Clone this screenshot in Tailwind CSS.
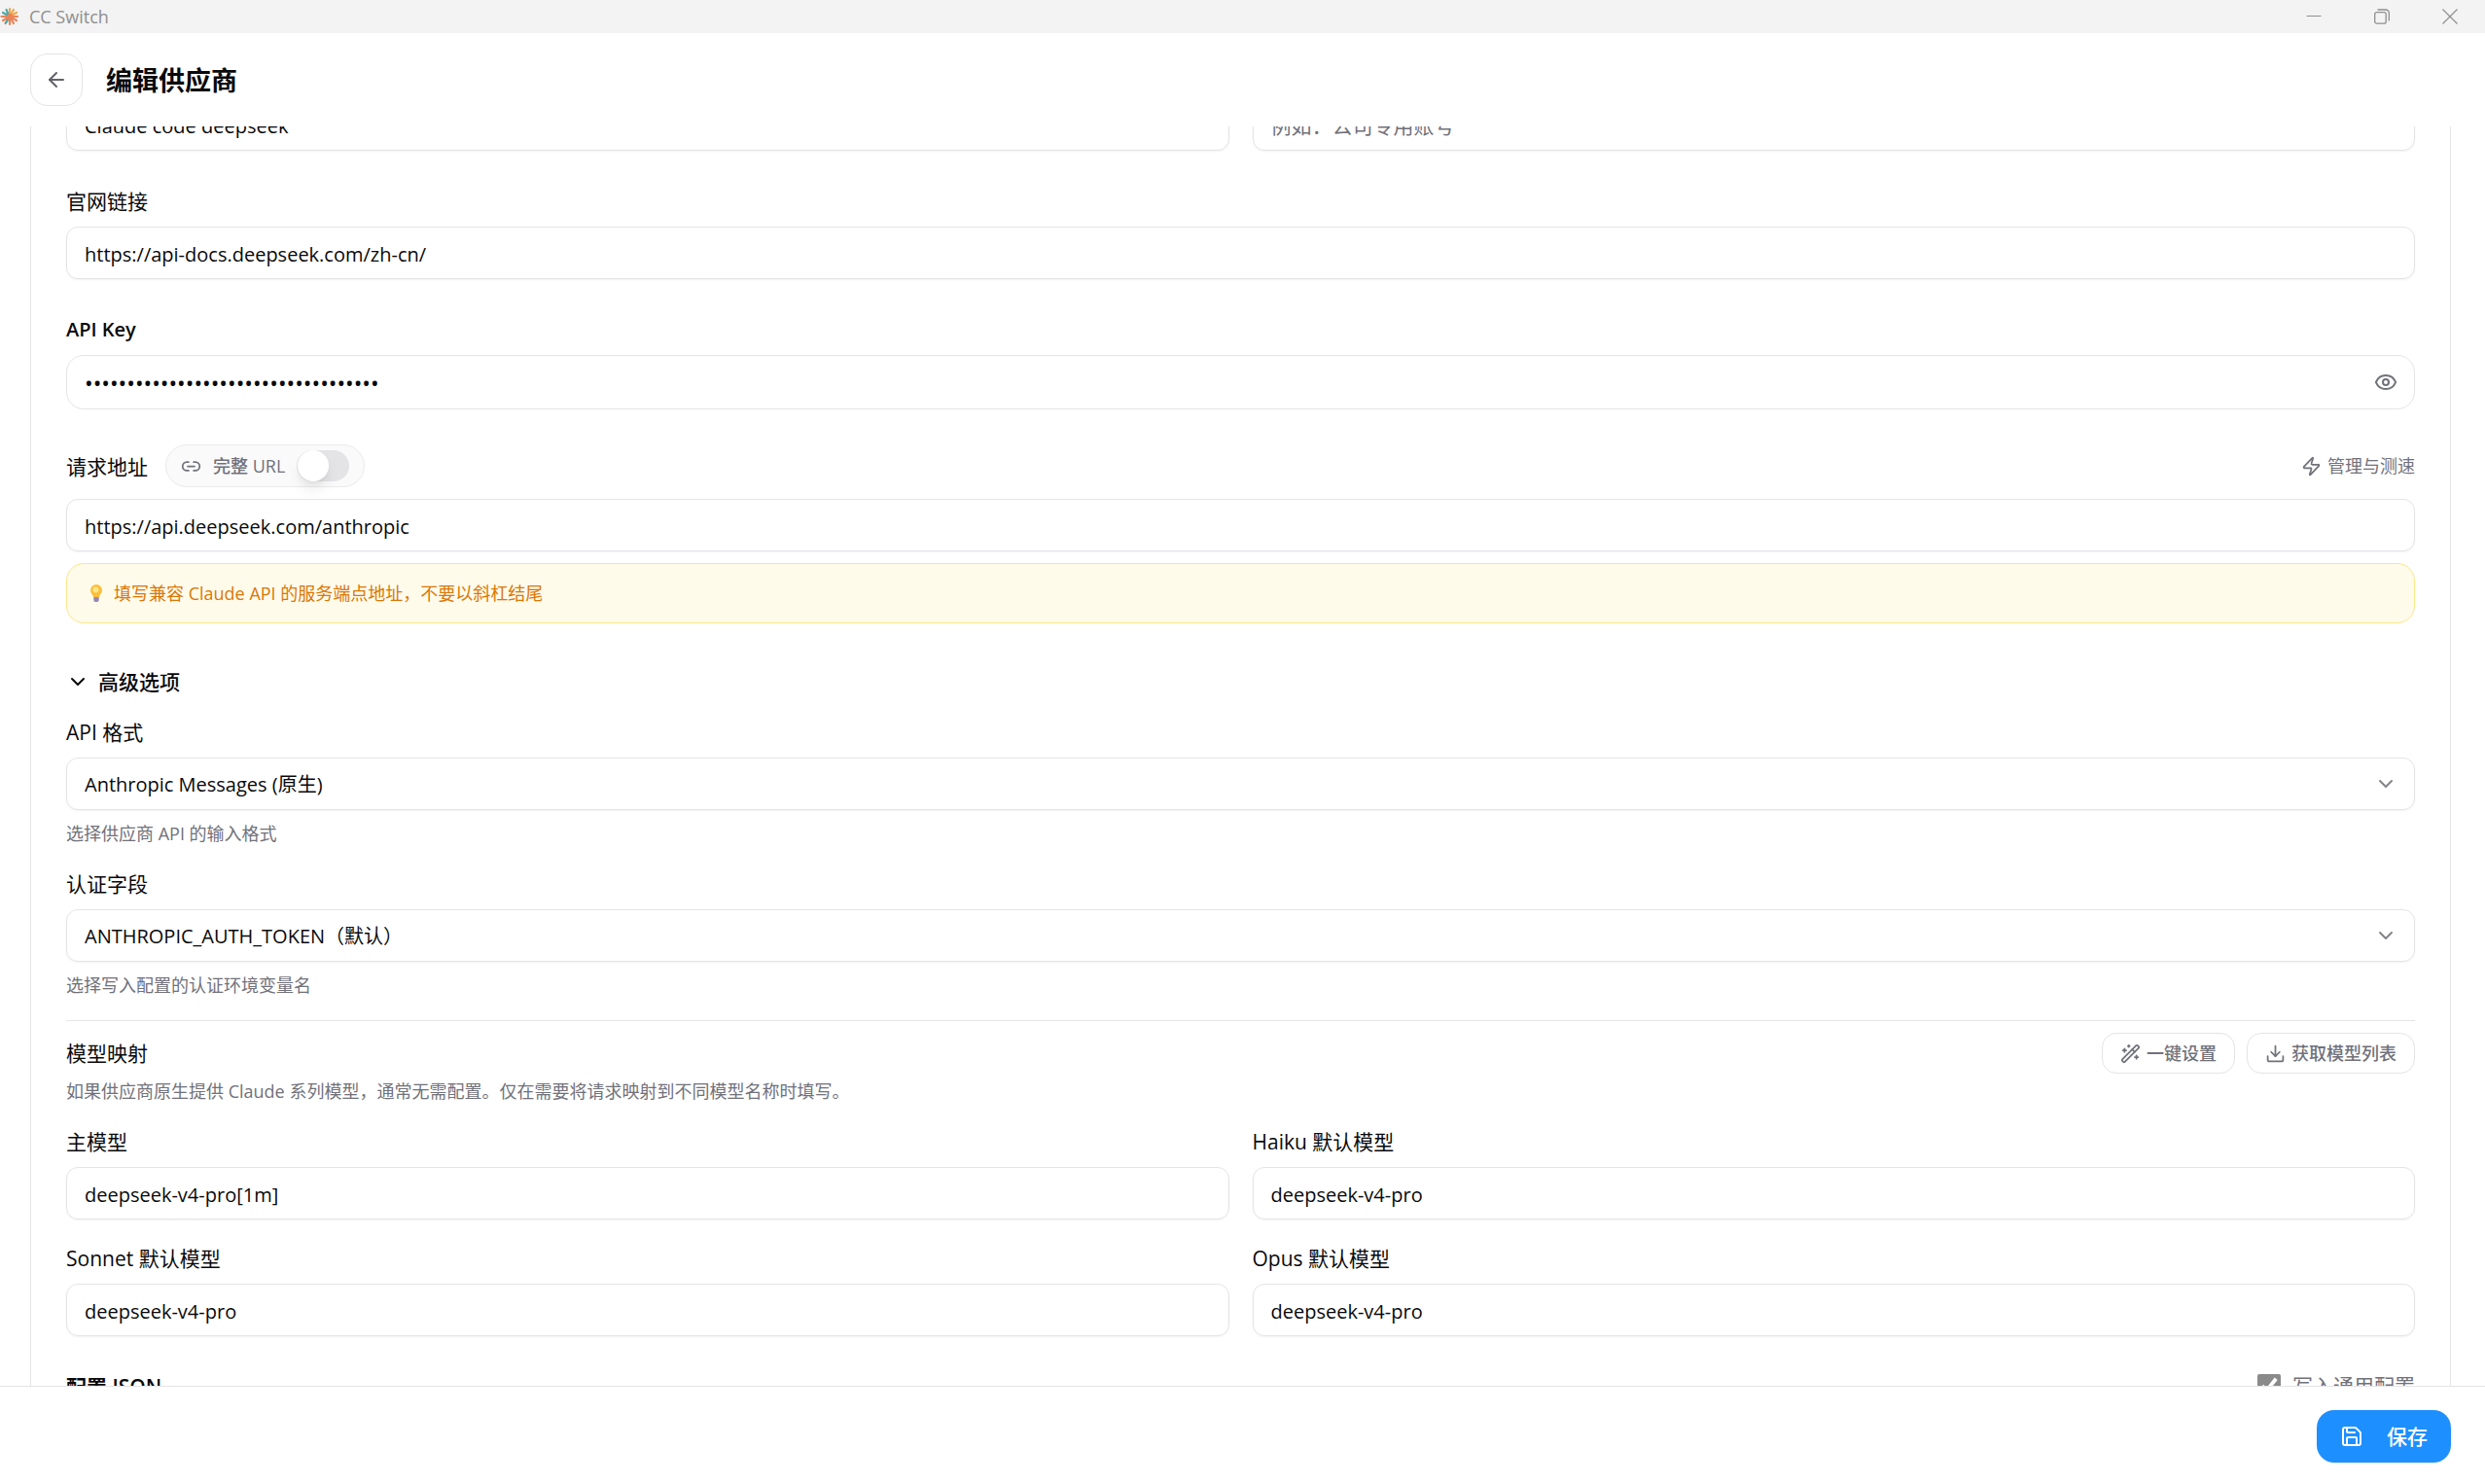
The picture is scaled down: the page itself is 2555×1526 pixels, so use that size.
<!DOCTYPE html>
<html lang="zh-CN">
<head>
    <meta charset="UTF-8">
    <meta name="viewport" content="width=device-width, initial-scale=1.0">
    <title>CC Switch</title>
    <script src="https://cdn.jsdelivr.net/npm/@tailwindcss/browser@4"></script>
</head>
<body class="h-screen flex flex-col overflow-hidden bg-white text-[#09090b] text-[21px] leading-[30px] font-['Open_Sans','Noto_Sans_CJK_SC',sans-serif]">
    <!-- Title Bar -->
    <div class="h-[34px] shrink-0 flex items-center justify-between bg-[#f3f3f3] text-[#8f8f8f]">
        <div class="flex items-center gap-[10px]">
            <svg class="size-5" viewBox="0 0 20 20" fill="none" stroke-width="2.2" stroke-linecap="round">
                <path stroke="#e8845a" d="M10 10h8M10 10l7 4M10 10l4 7M10 10v8M10 10l-4.500 7M10 10l-7 4M10 10H1.500"/>
                <path stroke="#f0a850" d="M10 10V2M10 10l4-7M10 10l7-4"/>
                <path stroke="#4fa8a8" d="M8.500 7.500L6.500 3M7.500 8.500L3 6M6 16.500L7.500 14"/>
                <circle cx="10" cy="10" r="3" fill="#e8845a"/>
            </svg>
            <span class="text-[18px] leading-6">CC Switch</span>
        </div>
        <div class="flex pr-px">
            <button type="button" aria-label="最小化" class="w-[70px] h-[34px] flex items-center justify-center">
                <svg class="size-4" viewBox="0 0 16 16" fill="none" stroke="currentColor"><path d="M0.500 7.500h15"/></svg>
            </button>
            <button type="button" aria-label="还原" class="w-[70px] h-[34px] flex items-center justify-center">
                <svg class="size-4" viewBox="0 0 16 16" fill="none" stroke="currentColor" stroke-width="1.300"><rect x="0.700" y="3.700" width="11.500" height="11.500" rx="2"/><path d="M3.500 1h8.500a3.300 3.300 0 0 1 3.300 3.300V12.500"/></svg>
            </button>
            <button type="button" aria-label="关闭" class="w-[70px] h-[34px] flex items-center justify-center">
                <svg class="size-4" viewBox="0 0 16 16" fill="none" stroke="currentColor" stroke-width="1.200"><path d="M0.500 0.500l15 15M15.500 0.500l-15 15"/></svg>
            </button>
        </div>
    </div>

    <!-- Page Header -->
    <header class="h-24 shrink-0 flex items-center gap-6 pl-[31px]">
        <button type="button" aria-label="返回" class="size-[54px] flex items-center justify-center rounded-[18px] border border-[#e4e4e7] text-[#62626a]">
            <svg class="size-6" viewBox="0 0 24 24" fill="none" stroke="currentColor" stroke-width="2" stroke-linecap="round" stroke-linejoin="round"><path d="m12 19-7-7 7-7"/><path d="M19 12H5"/></svg>
        </button>
        <h1 class="pt-0.5 text-[27px] leading-9 font-bold">编辑供应商</h1>
    </header>

    <!-- Form -->
    <main class="flex-1 min-h-0 overflow-hidden pl-[31px] pr-[35px]">
        <form id="providerForm" class="-mt-[29px] flex flex-col gap-9 border-x border-[#e4e4e7] px-9 pb-12">
            <div class="grid grid-cols-2 gap-6">
                <input type="text" aria-label="供应商名称" value="Claude code deepseek" class="h-[54px] w-full pt-0.5 px-[18px] text-[20px] rounded-xl border border-[#e4e4e7] shadow-xs">
                <input type="text" aria-label="备注" placeholder="例如：公司专用账号" class="h-[54px] w-full pt-0.5 px-[18px] rounded-xl border border-[#e4e4e7] shadow-xs placeholder:text-[#71717a]">
            </div>

            <div class="flex flex-col gap-3">
                <label for="website" class="pt-0.5 leading-7">官网链接</label>
                <input type="text" id="website" value="https://api-docs.deepseek.com/zh-cn/" class="h-[54px] w-full pt-0.5 px-[18px] text-[20px] rounded-xl border border-[#e4e4e7] shadow-xs">
            </div>

            <div class="flex flex-col gap-3">
                <label for="apiKey" class="pt-0.5 leading-7 text-[20px] font-semibold">API Key</label>
                <div class="relative">
                    <input type="password" id="apiKey" value="sk-00000000000000000000000000000000" class="block h-14 w-full pt-0.5 pl-[18px] pr-[60px] text-[23px] rounded-[18px] border border-[#e4e4e7]">
                    <button type="button" id="toggleKey" aria-label="显示" class="absolute inset-y-0 right-[18px] flex items-center text-[#71717a]">
                        <svg class="size-6" viewBox="0 0 24 24" fill="none" stroke="currentColor" stroke-width="2" stroke-linecap="round" stroke-linejoin="round"><path d="M2.062 12.348a1 1 0 0 1 0-.696 10.750 10.750 0 0 1 19.876 0 1 1 0 0 1 0 .696 10.750 10.750 0 0 1-19.876 0"/><circle cx="12" cy="12" r="3"/></svg>
                    </button>
                </div>
            </div>

            <div class="flex flex-col gap-3">
                <div class="flex items-center justify-between">
                    <div class="flex items-center gap-[18px]">
                        <label for="baseUrl" class="pt-0.5 leading-7">请求地址</label>
                        <label class="h-11 flex items-center gap-3 px-[15px] rounded-full border border-[#ebebed] bg-[#fafafa] text-[18px] leading-6 font-medium text-[#71717a]">
                            <svg class="size-[21px]" viewBox="0 0 24 24" fill="none" stroke="currentColor" stroke-width="2" stroke-linecap="round" stroke-linejoin="round"><path d="M9 17H7A5 5 0 0 1 7 7h2"/><path d="M15 7h2a5 5 0 1 1 0 10h-2"/><path d="M8 12h8"/></svg>
                            <span>完整 URL</span>
                            <input type="checkbox" role="switch" class="appearance-none w-[54px] h-8 rounded-full bg-[#e4e4e7] before:block before:size-8 before:ml-px before:rounded-full before:bg-white before:shadow-lg checked:bg-[#1e8fff] checked:before:ml-[22px]">
                        </label>
                    </div>
                    <button type="button" class="flex items-center gap-[6px] text-[18px] leading-6 text-[#71717a]">
                        <svg class="size-[21px]" viewBox="0 0 24 24" fill="none" stroke="currentColor" stroke-width="2" stroke-linecap="round" stroke-linejoin="round"><path d="M4 14a1 1 0 0 1-.780-1.630l9.900-10.200a.5.5 0 0 1 .860.460l-1.920 6.020A1 1 0 0 0 13 10h7a1 1 0 0 1 .780 1.630l-9.900 10.200a.5.5 0 0 1-.860-.460l1.920-6.020A1 1 0 0 0 11 14z"/></svg>
                        管理与测速
                    </button>
                </div>
                <input type="text" id="baseUrl" value="https://api.deepseek.com/anthropic" class="h-[54px] w-full pt-0.5 px-[18px] text-[20px] rounded-xl border border-[#e4e4e7] shadow-xs">
                <div class="h-[62px] flex items-center gap-[6px] px-[18px] rounded-[18px] border border-[#fde68a] bg-[#fffbeb] text-[18px] leading-6 text-[#d97706]">
                    <svg class="w-6 h-[18px]" viewBox="0 0 24 18">
                        <path fill="#fbbf3c" d="M12 0a6 6 0 0 0-6 6c0 3 2.500 4.200 3 7h6c.5-2.800 3-4 3-7a6 6 0 0 0-6-6z"/>
                        <circle cx="11.500" cy="5.500" r="3" fill="#ffe48a"/>
                        <path fill="#9a86b4" d="M9.300 13h5.400v3a2 2 0 0 1-2 2h-1.400a2 2 0 0 1-2-2z"/>
                    </svg>
                    <span>填写兼容 Claude API 的服务端点地址，不要以斜杠结尾</span>
                </div>
            </div>

            <!-- Advanced Options -->
            <div class="flex flex-col gap-6">
                <div class="flex flex-col gap-3">
                    <button type="button" class="h-12 self-start flex items-center gap-[9px] font-medium">
                        <svg class="size-6" viewBox="0 0 24 24" fill="none" stroke="currentColor" stroke-width="2" stroke-linecap="round" stroke-linejoin="round"><path d="m6 9 6 6 6-6"/></svg>
                        高级选项
                    </button>
                    <label for="apiFormat" class="pt-0.5 leading-7">API 格式</label>
                    <div class="relative">
                        <select id="apiFormat" class="block appearance-none h-[54px] w-full pt-0.5 px-[18px] text-[20px] rounded-xl border border-[#e4e4e7] shadow-xs">
                            <option>Anthropic Messages (原生)</option>
                        </select>
                        <svg class="absolute top-[15px] right-[18px] size-6 text-[#84848a] pointer-events-none" viewBox="0 0 24 24" fill="none" stroke="currentColor" stroke-width="2" stroke-linecap="round" stroke-linejoin="round"><path d="m6 9 6 6 6-6"/></svg>
                    </div>
                    <p class="text-[18px] leading-6 text-[#71717a]">选择供应商 API 的输入格式</p>
                </div>

                <div class="flex flex-col gap-3">
                    <label for="authField" class="pt-0.5 leading-7">认证字段</label>
                    <div class="relative">
                        <select id="authField" class="block appearance-none h-[54px] w-full pt-0.5 px-[18px] text-[20px] rounded-xl border border-[#e4e4e7] shadow-xs">
                            <option>ANTHROPIC_AUTH_TOKEN（默认）</option>
                        </select>
                        <svg class="absolute top-[15px] right-[18px] size-6 text-[#84848a] pointer-events-none" viewBox="0 0 24 24" fill="none" stroke="currentColor" stroke-width="2" stroke-linecap="round" stroke-linejoin="round"><path d="m6 9 6 6 6-6"/></svg>
                    </div>
                    <p class="text-[18px] leading-6 text-[#71717a]">选择写入配置的认证环境变量名</p>
                </div>

                <!-- Model Mapping -->
                <div class="flex flex-col gap-[6px] border-t border-[#e4e4e7] pt-3">
                    <div class="flex items-center justify-between">
                        <h2>模型映射</h2>
                        <div class="flex gap-3 text-[18px] leading-6 font-medium text-[#71717a]">
                            <button type="button" class="h-[42px] flex items-center gap-[6px] px-[18px] rounded-[15px] border border-[#e4e4e7]">
                                <svg class="size-[21px]" viewBox="0 0 24 24" fill="none" stroke="currentColor" stroke-width="2" stroke-linecap="round" stroke-linejoin="round"><path d="m21.640 3.640-1.280-1.280a1.210 1.210 0 0 0-1.720 0L2.360 18.640a1.210 1.210 0 0 0 0 1.720l1.280 1.280a1.200 1.200 0 0 0 1.720 0L21.640 5.360a1.200 1.200 0 0 0 0-1.720"/><path d="m14 7 3 3"/><path d="M5 6v4"/><path d="M19 14v4"/><path d="M10 2v2"/><path d="M7 8H3"/><path d="M21 16h-4"/><path d="M11 3H9"/></svg>
                                一键设置
                            </button>
                            <button type="button" class="h-[42px] flex items-center gap-[6px] px-[18px] rounded-[15px] border border-[#e4e4e7]">
                                <svg class="size-[21px]" viewBox="0 0 24 24" fill="none" stroke="currentColor" stroke-width="2" stroke-linecap="round" stroke-linejoin="round"><path d="M21 15v4a2 2 0 0 1-2 2H5a2 2 0 0 1-2-2v-4"/><path d="m7 10 5 5 5-5"/><path d="M12 15V3"/></svg>
                                获取模型列表
                            </button>
                        </div>
                    </div>
                    <p class="text-[18px] leading-6 text-[#71717a]">如果供应商原生提供 Claude 系列模型，通常无需配置。仅在需要将请求映射到不同模型名称时填写。</p>
                </div>

                <div class="grid grid-cols-2 gap-6">
                    <div class="flex flex-col gap-3">
                        <label for="mainModel" class="pt-0.5 leading-7">主模型</label>
                        <input type="text" id="mainModel" value="deepseek-v4-pro[1m]" class="h-[54px] w-full pt-0.5 px-[18px] text-[20px] rounded-xl border border-[#e4e4e7] shadow-xs">
                    </div>
                    <div class="flex flex-col gap-3">
                        <label for="haikuModel" class="pt-0.5 leading-7">Haiku 默认模型</label>
                        <input type="text" id="haikuModel" value="deepseek-v4-pro" class="h-[54px] w-full pt-0.5 px-[18px] text-[20px] rounded-xl border border-[#e4e4e7] shadow-xs">
                    </div>
                    <div class="flex flex-col gap-3">
                        <label for="sonnetModel" class="pt-0.5 leading-7">Sonnet 默认模型</label>
                        <input type="text" id="sonnetModel" value="deepseek-v4-pro" class="h-[54px] w-full pt-0.5 px-[18px] text-[20px] rounded-xl border border-[#e4e4e7] shadow-xs">
                    </div>
                    <div class="flex flex-col gap-3">
                        <label for="opusModel" class="pt-0.5 leading-7">Opus 默认模型</label>
                        <input type="text" id="opusModel" value="deepseek-v4-pro" class="h-[54px] w-full pt-0.5 px-[18px] text-[20px] rounded-xl border border-[#e4e4e7] shadow-xs">
                    </div>
                </div>
            </div>

            <div class="flex items-center justify-between">
                <h2 class="pt-0.5 leading-7 font-semibold">配置 JSON</h2>
                <label class="flex items-center gap-3 text-[#71717a]">
                    <input type="checkbox" checked class="size-6 accent-[#8a8a8a]">
                    写入通用配置
                </label>
            </div>
        </form>
    </main>

    <!-- Footer -->
    <footer class="shrink-0 flex justify-end border-t border-[#e4e4e7] pt-6 pb-[22px] pr-[35px]">
        <button type="submit" form="providerForm" class="h-[54px] flex items-center gap-6 px-6 rounded-[18px] bg-[#1e8fff] text-white font-medium">
            <svg class="size-6" viewBox="0 0 24 24" fill="none" stroke="currentColor" stroke-width="2" stroke-linecap="round" stroke-linejoin="round"><path d="M15.200 3a2 2 0 0 1 1.400.6l3.800 3.800a2 2 0 0 1 .6 1.400V19a2 2 0 0 1-2 2H5a2 2 0 0 1-2-2V5a2 2 0 0 1 2-2z"/><path d="M17 21v-7a1 1 0 0 0-1-1H8a1 1 0 0 0-1 1v7"/><path d="M7 3v4a1 1 0 0 0 1 1h7"/></svg>
            保存
        </button>
    </footer>

    <script>
        // Show or hide the API key
        document.getElementById('toggleKey').addEventListener('click', function() {
            const apiKey = document.getElementById('apiKey');
            apiKey.type = apiKey.type === 'password' ? 'text' : 'password';
        });

        document.getElementById('providerForm').addEventListener('submit', function(e) {
            e.preventDefault();
        });
    </script>
</body>
</html>
